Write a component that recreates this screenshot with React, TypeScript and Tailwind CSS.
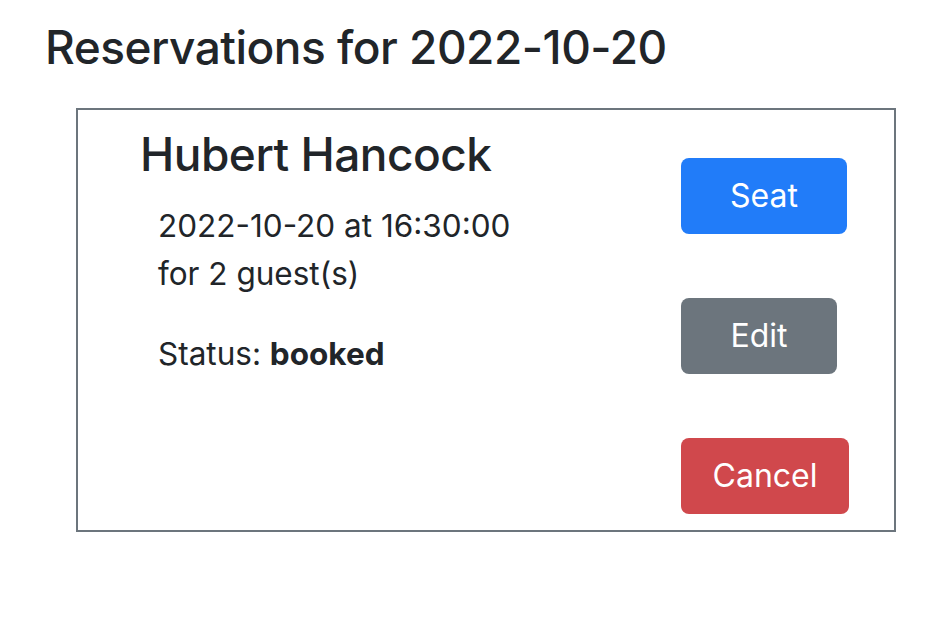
import React from 'react';

interface Reservation {
  name: string;
  date: string;
  time: string;
  people: number;
  status: string;
}

const reservation: Reservation = {
  name: 'Hubert Hancock',
  date: '2022-10-20',
  time: '16:30:00',
  people: 2,
  status: 'booked',
};

const btnBase = 'h-[76px] rounded-[8px] text-[32px] leading-[48px] text-white text-center';

const App: React.FC = () => {
  return (
    <div className="min-h-screen bg-white text-[#212529] pl-[45px] pt-[18px]" style={{ fontFamily: 'Inter, "Liberation Sans", Arial, sans-serif' }}>
      <h2 className="text-[46px] leading-[58px] font-medium m-0 tracking-[-0.5px]">Reservations for {reservation.date}</h2>

      <div className="mt-[32px] ml-[31px] w-[820px] h-[424px] border-2 border-[#6c757d] flex">
        <div className="flex-1 pl-[62px] pt-[15px]">
          <h3 className="text-[46px] leading-[58px] font-medium tracking-[-0.5px]">{reservation.name}</h3>
          <div className="pl-[18px] pt-[19px] text-[31.5px] leading-[48px]">
            <p>
              {reservation.date} at {reservation.time}
            </p>
            <p className="mb-[32px]">for {reservation.people} guest(s)</p>
            <p>
              Status: <span className="font-bold">{reservation.status}</span>
            </p>
          </div>
        </div>

        <div className="flex flex-col items-start gap-[64px] pt-[48px] mr-[45px]">
          <button className={`${btnBase} w-[166px] bg-[#217cf9]`}>Seat</button>
          <button className={`${btnBase} w-[156px] bg-[#6c757d]`}>Edit</button>
          <button className={`${btnBase} w-[168px] bg-[#d0484c]`}>Cancel</button>
        </div>
      </div>
    </div>
  );
};

export default App;
